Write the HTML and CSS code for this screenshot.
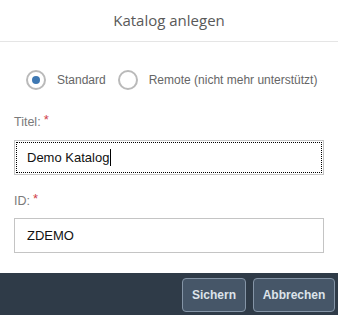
FILE: index.html
```html
<!DOCTYPE html>
<html lang="de">

<head>
    <meta charset="UTF-8">
    <meta name="viewport" content="width=device-width, initial-scale=1.0">
    <title>Katalog anlegen</title>
    <link rel="stylesheet" href="styles.css">
</head>

<body>
    <div class="dialog">
        <div class="header">Katalog anlegen</div>

        <div class="content">
            <div class="radios">
                <span class="radio checked"></span>
                <span class="radio-text">Standard</span>
                <span class="radio"></span>
                <span class="radio-text">Remote (nicht mehr unterstützt)</span>
            </div>

            <div class="label label-first">Titel:<span class="req">*</span></div>
            <div class="field focused">Demo Katalog<span class="caret"></span></div>

            <div class="label">ID:<span class="req">*</span></div>
            <div class="field field-id">ZDEMO</div>
        </div>

        <div class="footer">
            <span class="btn btn-save">Sichern</span>
            <span class="btn btn-cancel">Abbrechen</span>
        </div>
    </div>
</body>

</html>
```

FILE: styles.css
```css
* {
    padding: 0;
    margin: 0;
    box-sizing: border-box;
}

body {
    width: 338px;
    height: 317px;
    background-color: #fff;
    font-family: "Liberation Sans", Arial, sans-serif;
    overflow: hidden;
}

.dialog {
    display: flex;
    flex-direction: column;
    height: 317px;
}

.header {
    height: 42px;
    border-bottom: 1px solid #e5e5e5;
    text-align: center;
    font: 15px/40px "Open Sans", "Liberation Sans", sans-serif;
    color: #595959;
}

.content {
    padding: 0 14px;
}

.radios {
    display: flex;
    align-items: center;
    height: 24px;
    margin-top: 26px;
    padding-left: 12px;
    font-size: 12px;
    color: #666;
    white-space: nowrap;
}

.radio {
    position: relative;
    flex: none;
    width: 20px;
    height: 20px;
    border: 2px solid #bababa;
    border-radius: 50%;
}

.checked::after {
    content: "";
    position: absolute;
    left: 4px;
    top: 4px;
    width: 8px;
    height: 8px;
    border-radius: 50%;
    background-color: #3e78b3;
}

.radio-text {
    margin: 0 12px 0 11px;
}

.label {
    height: 16px;
    margin-top: 18px;
    font-size: 12.5px;
    line-height: 16px;
    color: #7a7a7a;
}

.label-first {
    margin-top: 22px;
}

.req {
    margin-left: 3px;
    color: #d0404a;
    font-size: 13px;
    position: relative;
    top: -2px;
}

.field {
    display: flex;
    align-items: center;
    height: 35px;
    margin-top: 10px;
    padding-left: 12px;
    border: 1px solid #c4c4c4;
    font-size: 13px;
    color: #111;
}

.field-id {
    margin-top: 9px;
}

.focused {
    outline: 1px dotted #000;
    outline-offset: -3px;
}

.caret {
    width: 1px;
    height: 17px;
    margin-left: 1px;
    background-color: #000;
}

.footer {
    display: flex;
    justify-content: flex-end;
    gap: 7px;
    height: 42px;
    margin-top: auto;
    margin-bottom: 2px;
    padding: 5px 3px 0 0;
    background-color: #2f3b48;
}

.btn {
    display: flex;
    align-items: center;
    justify-content: center;
    height: 34px;
    border: 1px solid #8494a6;
    border-radius: 4px;
    background-color: #465668;
    color: #dde3ea;
    font-size: 12px;
    font-weight: bold;
}

.btn-save {
    width: 64px;
}

.btn-cancel {
    width: 82px;
}
```
